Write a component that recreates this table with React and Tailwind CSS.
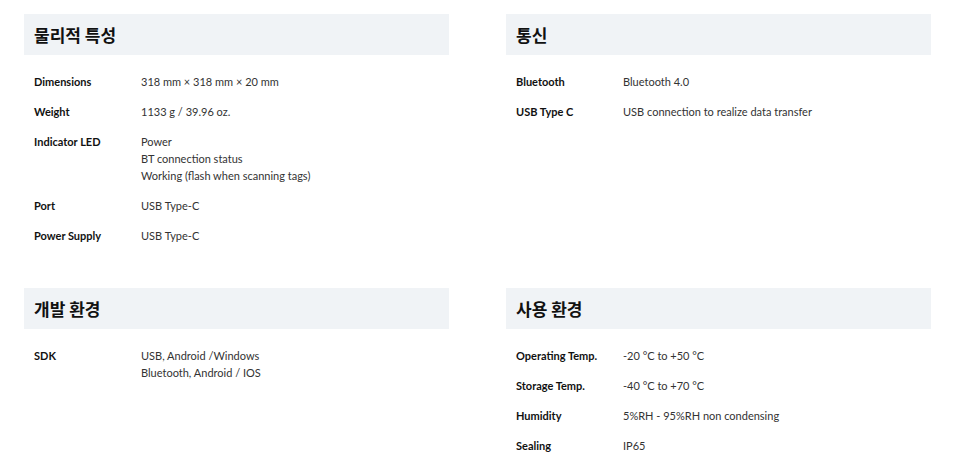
const sections = [
  [
    {
      title: "물리적 특성",
      rows: [
        ["Dimensions", ["318 mm × 318 mm × 20 mm"]],
        ["Weight", ["1133 g / 39.96 oz."]],
        ["Indicator LED", ["Power", "BT connection status", "Working (flash when scanning tags)"]],
        ["Port", ["USB Type-C"]],
        ["Power Supply", ["USB Type-C"]],
      ],
    },
    {
      title: "통신",
      rows: [
        ["Bluetooth", ["Bluetooth 4.0"]],
        ["USB Type C", ["USB connection to realize data transfer"]],
      ],
    },
  ],
  [
    {
      title: "개발 환경",
      rows: [["SDK", ["USB, Android /Windows", "Bluetooth, Android / IOS"]]],
    },
    {
      title: "사용 환경",
      rows: [
        ["Operating Temp.", ["-20 °C to +50 °C"]],
        ["Storage Temp.", ["-40 °C to +70 °C"]],
        ["Humidity", ["5%RH - 95%RH non condensing"]],
        ["Sealing", ["IP65"]],
      ],
    },
  ],
];

function Section({ s }) {
  return (
    <div>
      <div className="h-[41px] bg-[#f0f3f6] flex items-center px-[10px]">
        <h2 className="text-[17px] font-bold text-[#111] font-['Noto_Sans_CJK_KR',sans-serif] leading-none">
          {s.title}
        </h2>
      </div>
      <div className="pt-[18px] flex flex-col gap-[13px] px-[10px]">
        {s.rows.map(([k, v]) => (
          <div key={k} className="flex text-[11px] leading-[17px]">
            <div className="w-[107px] font-bold text-[#111]">{k}</div>
            <div className="text-[#333]">
              {v.map((line) => (
                <div key={line}>{line}</div>
              ))}
            </div>
          </div>
        ))}
      </div>
    </div>
  );
}

export default function App() {
  return (
    <div className="w-[960px] h-[476px] bg-white font-['Lato',sans-serif] pl-[24px] pt-[14px] overflow-hidden">
      <div className="flex flex-col gap-[44px]">
        {sections.map((row, i) => (
          <div key={i} className="grid grid-cols-[425px_425px] gap-x-[57px]">
            {row.map((s) => (
              <Section key={s.title} s={s} />
            ))}
          </div>
        ))}
      </div>
    </div>
  );
}
